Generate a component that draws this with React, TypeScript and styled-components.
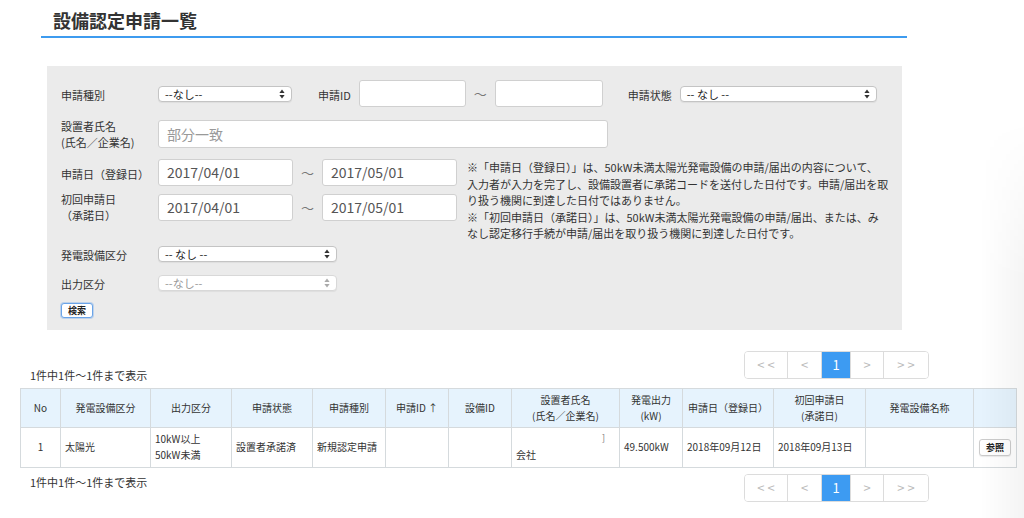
import React from "react";
import styled, { createGlobalStyle } from "styled-components";

const GlobalStyle = createGlobalStyle`
  body {
    margin: 0;
    background: #fff;
    color: #333;
    font-family: "Noto Sans CJK JP", "Noto Sans", sans-serif;
  }
`;

const Page = styled.div`
  width: 1024px;
  min-height: 518px;
  overflow: hidden;
`;

const Title = styled.h1`
  margin: 0 0 0 41px;
  width: 866px;
  box-sizing: border-box;
  padding: 7px 12px 3px;
  font-size: 18px;
  line-height: 26px;
  font-weight: bold;
  color: #333;
  border-bottom: 2px solid #3d9bef;
`;

const SearchPanel = styled.div`
  margin: 28px 0 0 47px;
  width: 855px;
  box-sizing: border-box;
  background: #ebebeb;
  padding: 14px 14px 12px;
`;

const Row = styled.div<{ $gap?: number; $height?: number }>`
  display: flex;
  align-items: center;
  margin-top: ${(p) => p.$gap ?? 0}px;
  min-height: ${(p) => p.$height ?? 0}px;
`;

const Label = styled.div<{ $multi?: boolean }>`
  width: 97px;
  flex-shrink: 0;
  font-size: 11px;
  line-height: 16px;
  padding-top: ${(p) => (p.$multi ? 0 : 3)}px;
`;

const InlineLabel = styled.div<{ $left: number; $right: number }>`
  font-size: 11px;
  line-height: 16px;
  padding-top: 3px;
  margin-left: ${(p) => p.$left}px;
  margin-right: ${(p) => p.$right}px;
`;

const TextInput = styled.div<{ $width: number; $tall?: boolean; $placeholder?: boolean }>`
  width: ${(p) => p.$width}px;
  height: ${(p) => (p.$tall ? 28 : 27)}px;
  box-sizing: border-box;
  background: #fff;
  border: 1px solid #d0d0d0;
  border-radius: 3px;
  padding: 0 8px;
  font-size: 14px;
  line-height: ${(p) => (p.$tall ? 26 : 25)}px;
  color: ${(p) => (p.$placeholder ? "#999" : "#555")};
  flex-shrink: 0;
`;

const Tilde = styled.div`
  width: 29px;
  text-align: center;
  font-size: 13px;
  color: #777;
`;

const SelectBox = styled.div<{ $width: number; $disabled?: boolean }>`
  width: ${(p) => p.$width}px;
  height: 16px;
  box-sizing: border-box;
  display: flex;
  align-items: center;
  justify-content: space-between;
  background: #fff;
  border: 1px solid ${(p) => (p.$disabled ? "#d8d8d8" : "#c4c4c4")};
  border-radius: 4px;
  padding: 0 6px;
  font-size: 11px;
  color: ${(p) => (p.$disabled ? "#999" : "#222")};
  flex-shrink: 0;
  box-shadow: 0 1px 1px rgba(0, 0, 0, 0.06);
`;

const DateBlock = styled.div`
  display: flex;
  margin-top: 9px;
`;

const DateRows = styled.div`
  display: flex;
  flex-direction: column;
  gap: 5px;
`;

const Note = styled.p`
  margin: 0 0 0 10px;
  font-size: 11px;
  line-height: 16.5px;
  white-space: nowrap;
  color: #333;
`;

const SearchButton = styled.button`
  width: 32px;
  height: 15px;
  padding: 0;
  background: #fff;
  border: 1px solid #6aa4e8;
  border-radius: 3px;
  font-family: inherit;
  font-size: 9px;
  font-weight: bold;
  line-height: 13px;
  color: #222;
  box-shadow: 0 0 0 1px rgba(106, 164, 232, 0.35);
`;

const Results = styled.div`
  margin: 21px 0 0 20px;
  width: 996px;
`;

const Bar = styled.div<{ $top?: boolean }>`
  display: flex;
  align-items: ${(p) => (p.$top ? "flex-end" : "flex-start")};
  justify-content: space-between;
  padding-right: 87px;
`;

const Count = styled.div<{ $top?: boolean }>`
  padding-left: 10px;
  font-size: 11px;
  line-height: 16px;
  margin-bottom: ${(p) => (p.$top ? -4 : 0)}px;
`;

const Pager = styled.div`
  display: flex;
  height: 28px;
  box-sizing: border-box;
  border: 1px solid #dcdcdc;
  border-radius: 4px;
  overflow: hidden;
`;

const PageButton = styled.div<{ $width: number; $active?: boolean }>`
  width: ${(p) => p.$width}px;
  display: flex;
  align-items: center;
  justify-content: center;
  font-size: 13px;
  letter-spacing: ${(p) => (p.$active ? 0 : 3)}px;
  text-indent: ${(p) => (p.$active ? 0 : 3)}px;
  color: ${(p) => (p.$active ? "#fff" : "#bbb")};
  background: ${(p) => (p.$active ? "#3d9bf2" : "#fff")};
  & + & {
    border-left: 1px solid #dcdcdc;
  }
`;

const Table = styled.table`
  width: 996px;
  margin: 9px 0 6px;
  border-collapse: collapse;
  table-layout: fixed;
  font-size: 10px;
  line-height: 16px;
`;

const Th = styled.th`
  height: 34px;
  padding: 2px 3px;
  background: #e6f3fd;
  border: 1px solid #d5dadd;
  font-weight: normal;
  text-align: center;
  color: #333;
`;

const Td = styled.td<{ $center?: boolean }>`
  height: 35px;
  padding: 2px 4px;
  border: 1px solid #d5dadd;
  text-align: ${(p) => (p.$center ? "center" : "left")};
  vertical-align: middle;
  color: #333;
`;

const Mark = styled.span`
  float: right;
  font-size: 9px;
  line-height: 14px;
  color: #777;
  margin-right: 10px;
`;

const ViewButton = styled.button`
  width: 32px;
  height: 17px;
  padding: 0;
  background: #fff;
  border: 1px solid #ccc;
  border-radius: 3px;
  font-family: inherit;
  font-size: 9px;
  font-weight: bold;
  color: #222;
  box-shadow: 0 1px 1px rgba(0, 0, 0, 0.08);
`;

const EdgeShade = styled.div`
  position: fixed;
  top: 120px;
  right: 0;
  bottom: 0;
  width: 44px;
  pointer-events: none;
  background: linear-gradient(to right, rgba(0, 0, 0, 0), rgba(0, 0, 0, 0.045));
  -webkit-mask-image: linear-gradient(to bottom, transparent, #000 160px);
  mask-image: linear-gradient(to bottom, transparent, #000 160px);
`;

const Arrows: React.FC<{ color: string }> = ({ color }) => (
  <svg width="6" height="10" viewBox="0 0 6 10">
    <path d="M3 0.5 L5.6 4 H0.4 Z" fill={color} />
    <path d="M3 9.5 L5.6 6 H0.4 Z" fill={color} />
  </svg>
);

const Select: React.FC<{ width: number; text: string; disabled?: boolean }> = ({
  width,
  text,
  disabled,
}) => (
  <SelectBox $width={width} $disabled={disabled}>
    <span>{text}</span>
    <Arrows color={disabled ? "#aaa" : "#333"} />
  </SelectBox>
);

const Pagination: React.FC = () => (
  <Pager>
    <PageButton $width={42}>{"<<"}</PageButton>
    <PageButton $width={33}>{"<"}</PageButton>
    <PageButton $width={28} $active>
      1
    </PageButton>
    <PageButton $width={32}>{">"}</PageButton>
    <PageButton $width={44}>{">>"}</PageButton>
  </Pager>
);

const columns = [40, 90, 81, 81, 73, 63, 63, 108, 63, 91, 92, 108, 43];

const headers: React.ReactNode[] = [
  "No",
  "発電設備区分",
  "出力区分",
  "申請状態",
  "申請種別",
  "申請ID ↑",
  "設備ID",
  <>
    設置者氏名
    <br />
    (氏名／企業名)
  </>,
  <>
    発電出力
    <br />
    (kW)
  </>,
  "申請日（登録日）",
  <>
    初回申請日
    <br />
    (承諾日)
  </>,
  "発電設備名称",
  "",
];

const App: React.FC = () => {
  return (
    <Page>
      <GlobalStyle />
      <Title>設備認定申請一覧</Title>

      <SearchPanel>
        <Row $height={27}>
          <Label>申請種別</Label>
          <Select width={134} text="--なし--" />
          <InlineLabel $left={26} $right={8}>
            申請ID
          </InlineLabel>
          <TextInput $width={107} />
          <Tilde>～</Tilde>
          <TextInput $width={108} />
          <InlineLabel $left={25} $right={8}>
            申請状態
          </InlineLabel>
          <Select width={197} text="-- なし --" />
        </Row>

        <Row $gap={11}>
          <Label $multi>
            設置者氏名
            <br />
            (氏名／企業名)
          </Label>
          <TextInput $width={450} $tall $placeholder>
            部分一致
          </TextInput>
        </Row>

        <DateBlock>
          <DateRows>
            <Row>
              <Label>申請日（登録日）</Label>
              <TextInput $width={135}>2017/04/01</TextInput>
              <Tilde>～</Tilde>
              <TextInput $width={135}>2017/05/01</TextInput>
            </Row>
            <Row>
              <Label $multi>
                初回申請日
                <br />
                （承諾日）
              </Label>
              <TextInput $width={135}>2017/04/01</TextInput>
              <Tilde>～</Tilde>
              <TextInput $width={135}>2017/05/01</TextInput>
            </Row>
          </DateRows>
          <Note>
            ※「申請日（登録日）」は、50kW未満太陽光発電設備の申請/届出の内容について、
            <br />
            入力者が入力を完了し、設備設置者に承諾コードを送付した日付です。申請/届出を取
            <br />
            り扱う機関に到達した日付ではありません。
            <br />
            ※「初回申請日（承諾日）」は、50kW未満太陽光発電設備の申請/届出、または、み
            <br />
            なし認定移行手続が申請/届出を取り扱う機関に到達した日付です。
          </Note>
        </DateBlock>

        <Row $gap={2} $height={20}>
          <Label>発電設備区分</Label>
          <Select width={179} text="-- なし --" />
        </Row>

        <Row $gap={9} $height={20}>
          <Label>出力区分</Label>
          <Select width={179} text="--なし--" disabled />
        </Row>

        <Row $gap={10}>
          <SearchButton>検索</SearchButton>
        </Row>
      </SearchPanel>

      <Results>
        <Bar $top>
          <Count $top>1件中1件～1件まで表示</Count>
          <Pagination />
        </Bar>

        <Table>
          <colgroup>
            {columns.map((w, i) => (
              <col key={i} style={{ width: w }} />
            ))}
          </colgroup>
          <thead>
            <tr>
              {headers.map((h, i) => (
                <Th key={i}>{h}</Th>
              ))}
            </tr>
          </thead>
          <tbody>
            <tr>
              <Td $center>1</Td>
              <Td>太陽光</Td>
              <Td>
                10kW以上
                <br />
                50kW未満
              </Td>
              <Td>設置者承諾済</Td>
              <Td>新規認定申請</Td>
              <Td />
              <Td />
              <Td>
                <Mark>]</Mark>
                <br />
                会社
              </Td>
              <Td>49.500kW</Td>
              <Td>2018年09月12日</Td>
              <Td>2018年09月13日</Td>
              <Td />
              <Td $center>
                <ViewButton>参照</ViewButton>
              </Td>
            </tr>
          </tbody>
        </Table>

        <Bar>
          <Count>1件中1件～1件まで表示</Count>
          <Pagination />
        </Bar>
      </Results>
      <EdgeShade />
    </Page>
  );
};

export default App;
